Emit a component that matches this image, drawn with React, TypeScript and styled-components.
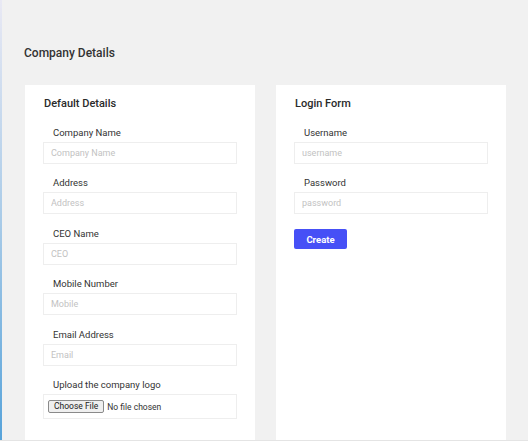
import React from 'react';
import styled, { createGlobalStyle } from 'styled-components';

const GlobalStyle = createGlobalStyle`
  body {
    margin: 0;
    background: #ffffff;
    font-family: Roboto, "Noto Sans", sans-serif;
    color: #333;
  }
`;

const defaultFields = [
  { label: 'Company Name', placeholder: 'Company Name' },
  { label: 'Address', placeholder: 'Address' },
  { label: 'CEO Name', placeholder: 'CEO' },
  { label: 'Mobile Number', placeholder: 'Mobile' },
  { label: 'Email Address', placeholder: 'Email' },
];

const loginFields = [
  { label: 'Username', placeholder: 'username', type: 'text' },
  { label: 'Password', placeholder: 'password', type: 'password' },
];

const App = () => {
  return (
    <>
      <GlobalStyle />
      <Shell>
        <SideStrip />
        <Main>
          <PageTitle>Company Details</PageTitle>
          <Cards>
            <Card>
              <CardTitle>Default Details</CardTitle>
              {defaultFields.map((f) => (
                <Field key={f.label}>
                  <Label>{f.label}</Label>
                  <TextInput type="text" placeholder={f.placeholder} />
                </Field>
              ))}
              <Field>
                <Label>Upload the company logo</Label>
                <FileBox>
                  <FileInput type="file" />
                </FileBox>
              </Field>
            </Card>
            <Card>
              <CardTitle>Login Form</CardTitle>
              {loginFields.map((f) => (
                <Field key={f.label}>
                  <Label>{f.label}</Label>
                  <TextInput type={f.type} placeholder={f.placeholder} />
                </Field>
              ))}
              <CreateButton type="button">Create</CreateButton>
            </Card>
          </Cards>
        </Main>
      </Shell>
    </>
  );
};

const Shell = styled.div`
  display: flex;
  height: 440px;
  background: #f1f1f1;
  border-bottom: 1px solid #e4e4e4;
  overflow: hidden;
`;

const SideStrip = styled.div`
  width: 2px;
  flex-shrink: 0;
  background: linear-gradient(to bottom, #e9e9f4 0%, #a9cbe8 50%, #57a3da 100%);
`;

const Main = styled.div`
  flex: 1;
  padding: 45px 0 0 22px;
  display: flex;
  flex-direction: column;
`;

const PageTitle = styled.h2`
  margin: 0 0 24px 0;
  font-size: 12px;
  line-height: 16px;
  font-weight: 500;
  color: #333;
`;

const Cards = styled.div`
  display: grid;
  grid-template-columns: 230px 230px;
  column-gap: 21px;
  margin-left: 1px;
  flex: 1;
`;

const Card = styled.div`
  background: #fff;
  padding: 11px 18px 0 18px;
  display: flex;
  flex-direction: column;
  align-items: flex-start;
`;

const CardTitle = styled.h3`
  margin: 0 0 14px 1px;
  font-size: 11px;
  line-height: 16px;
  font-weight: 500;
  color: #2a2a2a;
`;

const Field = styled.div`
  display: flex;
  flex-direction: column;
  align-self: stretch;
  margin-bottom: 12.4px;
`;

const Label = styled.label`
  margin: 0 0 2px 10px;
  font-size: 9.5px;
  line-height: 14px;
  color: #333;
`;

const TextInput = styled.input`
  box-sizing: border-box;
  width: 194px;
  height: 22px;
  border: 1px solid #eeeeee;
  outline: none;
  padding: 0 7px;
  font-family: inherit;
  font-size: 9px;
  color: #333;
  background: #fff;

  &::placeholder {
    color: #c2c2c2;
  }
`;

const FileBox = styled.div`
  box-sizing: border-box;
  width: 194px;
  height: 25px;
  border: 1px solid #eeeeee;
  display: flex;
  align-items: center;
  padding-left: 4px;
`;

const FileInput = styled.input`
  font-family: Roboto, sans-serif;
  font-size: 8.5px;
  color: #333;

  &::file-selector-button {
    font-family: Roboto, sans-serif;
    font-size: 8.5px;
    color: #222;
    padding: 0 5px;
    height: 13px;
    margin-right: 3px;
    border: 1px solid #8a8a8a;
    border-radius: 2px;
    background: #efefef;
  }
`;

const CreateButton = styled.button`
  margin-top: 2.4px;
  width: 53px;
  height: 20px;
  border: none;
  border-radius: 2px;
  background: #4650f6;
  color: #fff;
  font-family: inherit;
  font-size: 9.5px;
  font-weight: 700;
  cursor: pointer;
`;

export default App;
